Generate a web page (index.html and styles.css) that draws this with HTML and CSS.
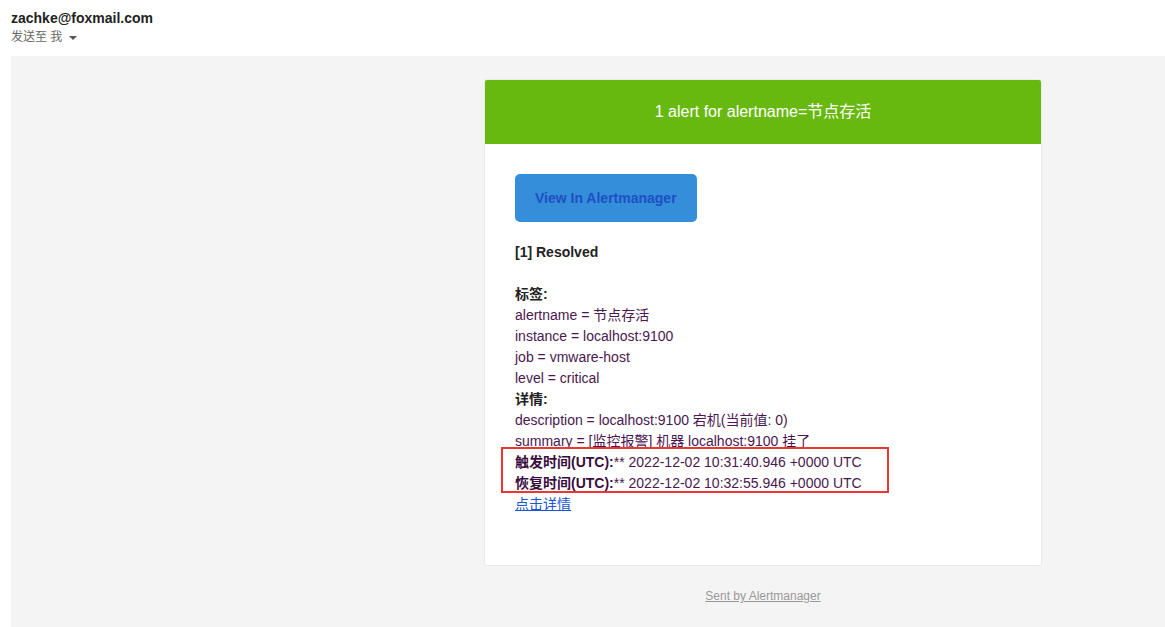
FILE: index.html
```html
<!DOCTYPE html>
<html lang="zh">
<head>
<meta charset="utf-8">
<link rel="stylesheet" href="styles.css">
</head>
<body>
<div class="mail-head">
  <div class="sender">zachke@foxmail.com</div>
  <div class="to">发送至 我 <span class="caret"></span></div>
</div>
<div class="mail-body">
  <div class="column">
    <div class="card">
      <div class="alert-head">1 alert for alertname=节点存活</div>
      <div class="content">
        <div class="block"><a class="btn" href="#">View In Alertmanager</a></div>
        <div class="block details">
          <strong class="dark">[1] Resolved</strong><br><br>
          <strong class="dark">标签:</strong><br>
          alertname = 节点存活<br>
          instance = localhost:9100<br>
          job = vmware-host<br>
          level = critical<br>
          <strong class="dark">详情:</strong><br>
          description = localhost:9100 宕机(当前值: 0)<br>
          summary = [监控报警] 机器 localhost:9100 挂了<br>
          <strong>触发时间(UTC):</strong>** 2022-12-02 10:31:40.946 +0000 UTC<br>
          <strong>恢复时间(UTC):</strong>** 2022-12-02 10:32:55.946 +0000 UTC<br>
          <a class="link" href="#">点击详情</a>
          <div class="highlight"></div>
        </div>
      </div>
    </div>
    <div class="footer"><a href="#">Sent by Alertmanager</a></div>
  </div>
</div>
</body>
</html>
```

FILE: styles.css
```css
html, body {
  margin: 0;
  padding: 0;
  background: #fff;
  font-family: "Liberation Sans", Arial, "Noto Sans CJK SC", sans-serif;
}
.mail-head {
  padding: 8px 11px 10px;
}
.sender {
  font-size: 14px;
  font-weight: bold;
  line-height: 20px;
  color: #222;
}
.to {
  font-size: 12px;
  line-height: 18px;
  color: #666;
}
.caret {
  display: inline-block;
  width: 0;
  height: 0;
  margin-left: 3px;
  vertical-align: middle;
  border-left: 4px solid transparent;
  border-right: 4px solid transparent;
  border-top: 4px solid #555;
}
.mail-body {
  margin-left: 11px;
  background: #f4f4f4;
  height: 571px;
  padding-top: 23px;
  box-sizing: border-box;
}
.column {
  margin-left: 473px;
  width: 558px;
}
.card {
  background: #fff;
  border: 1px solid #e9e9e9;
  border-radius: 3px;
  overflow: hidden;
}
.alert-head {
  background: #68b90f;
  color: #fff;
  font-size: 16px;
  line-height: 24px;
  padding: 20px;
  text-align: center;
}
.content {
  padding: 30px;
}
.block {
  padding-bottom: 20px;
  font-size: 14px;
  line-height: 21px;
}
.btn {
  display: inline-block;
  background: #348eda;
  color: #1f4fc4;
  font-weight: bold;
  font-size: 14px;
  line-height: 28px;
  padding: 10px 20px;
  border-radius: 5px;
  text-decoration: none;
}
.details {
  position: relative;
  color: #4a1750;
}
.details strong {
  color: #3a0d40;
}
.details strong.dark {
  color: #222;
}
.link {
  color: #1a56d6;
  text-decoration: underline;
}
.highlight {
  position: absolute;
  left: -14px;
  top: 205px;
  width: 384px;
  height: 42px;
  border: 2px solid #f03434;
}
.footer {
  text-align: center;
  padding: 20px 0;
  font-size: 12px;
  line-height: 20px;
}
.footer a {
  color: #999;
  text-decoration: underline;
}
```
